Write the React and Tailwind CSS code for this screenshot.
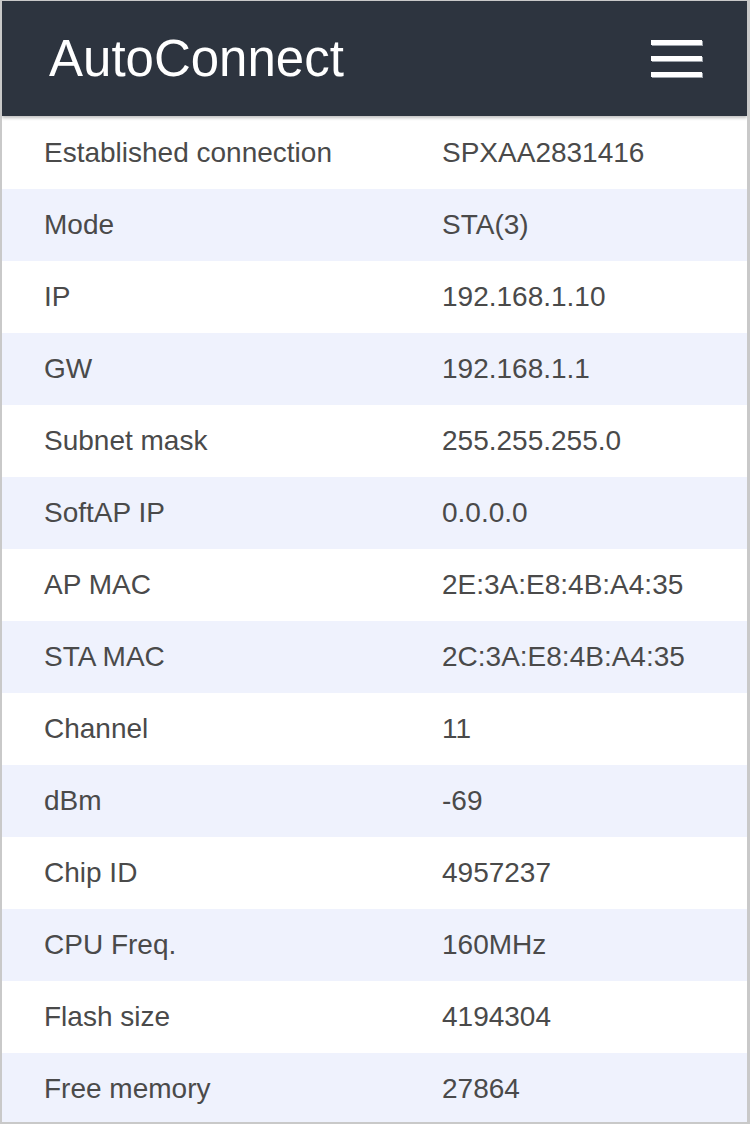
import React from "react";

const rows = [
  ["Established connection", "SPXAA2831416"],
  ["Mode", "STA(3)"],
  ["IP", "192.168.1.10"],
  ["GW", "192.168.1.1"],
  ["Subnet mask", "255.255.255.0"],
  ["SoftAP IP", "0.0.0.0"],
  ["AP MAC", "2E:3A:E8:4B:A4:35"],
  ["STA MAC", "2C:3A:E8:4B:A4:35"],
  ["Channel", "11"],
  ["dBm", "-69"],
  ["Chip ID", "4957237"],
  ["CPU Freq.", "160MHz"],
  ["Flash size", "4194304"],
  ["Free memory", "27864"],
];

export default function App() {
  return (
    <div
      className="w-[750px] h-[1124px] overflow-hidden bg-white border-t border-l-2 border-r-[3px] border-b-2 border-[#c9c9c9] flex flex-col"
      style={{ fontFamily: '"Liberation Sans", Arial, sans-serif' }}
    >
      <div className="relative z-10 h-[115px] shrink-0 bg-[#2d343f] flex items-start justify-between shadow-[0_2px_3px_rgba(0,0,0,0.25)]">
        <div className="pl-[47px] pt-[32px]">
          <div className="text-white text-[51px] leading-[51px] whitespace-nowrap">
            AutoConnect
          </div>
        </div>
        <div className="pt-[39px] pr-[45px] flex flex-col gap-[11px]">
          <div className="w-[51px] h-[5px] bg-white shadow-[1px_1px_0_#9aa0a8]" />
          <div className="w-[51px] h-[5px] bg-white shadow-[1px_1px_0_#9aa0a8]" />
          <div className="w-[51px] h-[5px] bg-white shadow-[1px_1px_0_#9aa0a8]" />
        </div>
      </div>
      <div className="flex flex-col">
        {rows.map(([k, v], i) => (
          <div
            key={k}
            className={
              "flex items-center shrink-0 text-[28px] text-[#4a4a4a] " +
              (i === 0 ? "h-[73px] " : "h-[72px] ") +
              (i % 2 === 1 ? "bg-[#eff2fd]" : "bg-white")
            }
          >
            <div className="w-[440px] shrink-0 pl-[42px] whitespace-nowrap">{k}</div>
            <div className="whitespace-nowrap">{v}</div>
          </div>
        ))}
      </div>
    </div>
  );
}
